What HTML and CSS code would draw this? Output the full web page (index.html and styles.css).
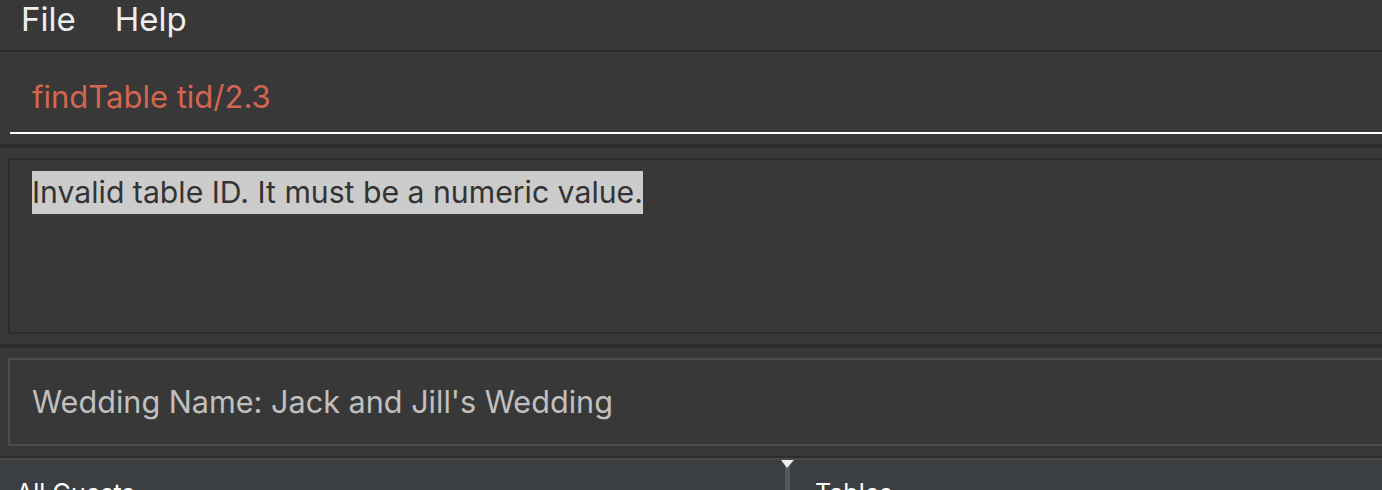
FILE: index.html
```html
<!DOCTYPE html>
<html>
<head>
<meta charset="utf-8">
<link rel="stylesheet" href="styles.css">
</head>
<body>
<div class="app">
  <div class="menubar">
    <span class="menu-item">File</span>
    <span class="menu-item">Help</span>
  </div>
  <div class="command-pane">
    <div class="command-input">findTable tid/2.3</div>
  </div>
  <div class="result-pane">
    <div class="result-box">
      <span class="result-text">Invalid table ID. It must be a numeric value.</span>
    </div>
  </div>
  <div class="wedding-pane">
    <div class="wedding-box">Wedding Name: Jack and Jill's Wedding</div>
  </div>
  <div class="split">
    <div class="split-left"><span class="panel-title">All Guests</span></div>
    <div class="divider"><span class="divider-grip"></span></div>
    <div class="split-right"><span class="panel-title">Tables</span></div>
  </div>
</div>
</body>
</html>
```
FILE: styles.css
```css
html, body {
  margin: 0;
  padding: 0;
  background: #383838;
  overflow: hidden;
}
body {
  width: 1382px;
  height: 490px;
  font-family: Inter, "Open Sans", sans-serif;
}
.app {
  width: 1382px;
  height: 490px;
  overflow: hidden;
  display: flex;
  flex-direction: column;
}
.menubar {
  height: 50px;
  flex: none;
  display: flex;
  align-items: flex-start;
  gap: 39px;
  padding-left: 21px;
  border-bottom: 2px solid #2b2b2b;
  box-sizing: content-box;
}
.menu-item {
  color: #eeeeee;
  font-size: 33px;
  line-height: 36px;
  padding-top: 1px;
}
.command-pane {
  height: 92px;
  flex: none;
  padding-left: 10px;
  border-bottom: 4px solid #2b2b2b;
  display: flex;
  flex-direction: column;
}
.command-input {
  height: 82px;
  border-bottom: 2px solid #ffffff;
  color: #d46651;
  font-size: 31px;
  line-height: 36px;
  padding: 27px 0 0 22px;
  box-sizing: border-box;
  margin-right: -200px;
}
.result-pane {
  flex: none;
  padding: 10px 0 10px 8px;
  border-bottom: 4px solid #2b2b2b;
}
.result-box {
  height: 176px;
  box-sizing: border-box;
  border: 2px solid #2c2c2c;
  border-right: none;
  margin-right: -200px;
  padding: 11px 0 0 22px;
}
.result-text {
  display: inline-block;
  background: #cccccc;
  color: #333333;
  font-size: 30.2px;
  line-height: 43px;
  height: 43px;
}
.wedding-pane {
  flex: none;
  padding: 10px 0 10px 8px;
  border-bottom: 2px solid #2b2b2b;
}
.wedding-box {
  height: 88px;
  box-sizing: border-box;
  border: 2px solid #4d4d4d;
  border-right: none;
  margin-right: -200px;
  padding: 0 0 2px 22px;
  display: flex;
  align-items: center;
  color: #c0c0c0;
  font-size: 30.6px;
}
.split {
  flex: 1;
  border-top: 2px solid #4a4a4a;
  background: #3c3f41;
  display: flex;
  overflow: hidden;
}
.split-left {
  width: 785px;
  flex: none;
  padding: 18px 0 0 16px;
  box-sizing: border-box;
}
.split-right {
  padding: 18px 0 0 25px;
}
.panel-title {
  color: #ffffff;
  font-size: 25px;
  line-height: 30px;
}
.divider {
  width: 5px;
  flex: none;
  background: #55585b;
  position: relative;
}
.divider-grip {
  position: absolute;
  top: 0;
  left: -4px;
  width: 0;
  height: 0;
  border-left: 6px solid transparent;
  border-right: 7px solid transparent;
  border-top: 8px solid #eeeeee;
}
```
